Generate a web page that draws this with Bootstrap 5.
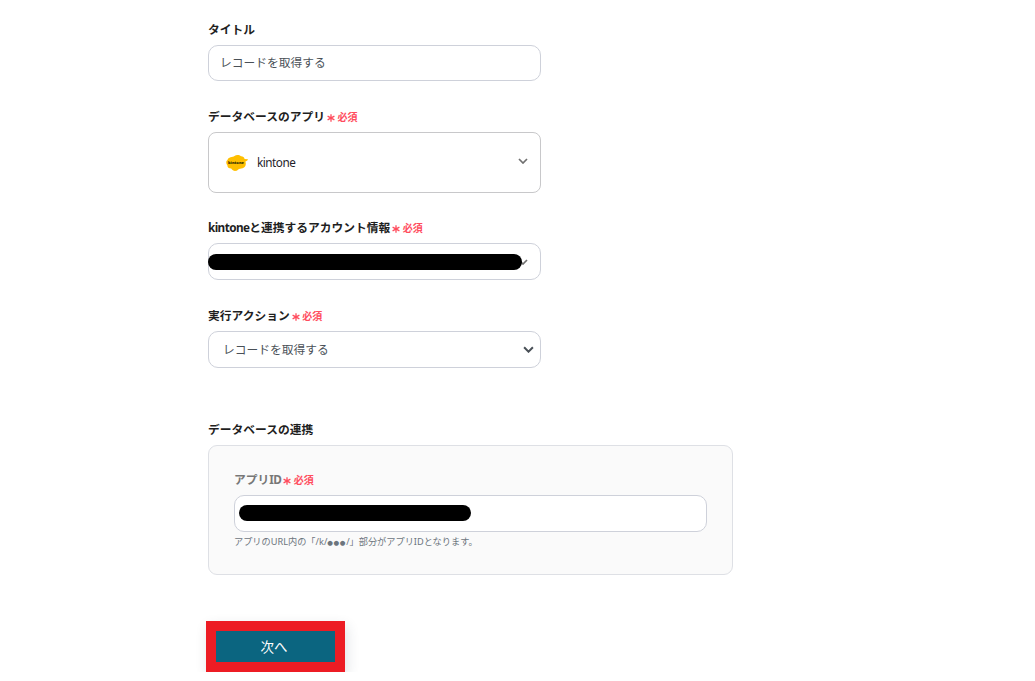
<!DOCTYPE html>
<html lang="ja">
  <head>
    <meta charset="UTF-8" />
    <meta name="viewport" content="width=device-width, initial-scale=1.0" />
    <title>レコードを取得する</title>
    <link
      href="https://cdn.jsdelivr.net/npm/bootstrap@5.3.2/dist/css/bootstrap.min.css"
      rel="stylesheet"
    />
    <style>
      body {
        font-family: "Noto Sans", "Noto Sans CJK JP", sans-serif;
        font-size: 11.75px;
        line-height: 18px;
        color: #1f1f1f;
        overflow: hidden;
      }
      .action-form {
        width: 525px;
        margin-left: 208px;
        padding-top: 20px;
      }
      .field {
        width: 333px;
        margin-bottom: 26px;
      }
      .field-app {
        margin-bottom: 25px;
      }
      .field-action {
        margin-bottom: 52px;
      }
      .field-label {
        display: flex;
        align-items: center;
        height: 18px;
        margin-bottom: 7px;
        font-weight: 700;
        white-space: nowrap;
      }
      .latin {
        letter-spacing: -0.5px;
      }
      .field-label .latin {
        letter-spacing: -0.6px;
      }
      .required {
        display: flex;
        align-items: center;
        gap: 2.5px;
        margin-left: 2px;
        padding-top: 1px;
        color: #ff4d5e;
        font-size: 10px;
      }
      .required svg {
        margin-top: 2px;
      }
      .field-box,
      .field-box:focus {
        height: 37px;
        padding: 0 11px;
        font-size: inherit;
        color: #495057;
        background-color: #fff;
        border: 1px solid #ced1da;
        border-radius: 10px;
      }
      .field-title .field-box {
        height: 36px;
        padding-bottom: 3px;
      }
      .field-app .field-box {
        height: 61px;
        padding: 0 12px 0 17px;
        color: #1f1f2b;
        border-color: #c8c8ca;
        border-radius: 8px;
      }
      .field-account .field-box {
        padding-right: 12px;
      }
      .field-action .field-box {
        padding: 0 6px 1px 14px;
      }
      .app-name {
        margin-left: 9px;
        padding-bottom: 1px;
      }
      .masked {
        display: block;
        height: 16px;
        background: #000;
        border-radius: 8px;
      }
      .masked-account {
        width: 314px;
        margin-left: -12px;
        margin-right: -10px;
        position: relative;
      }
      .masked-id {
        width: 232px;
        margin: 0 0 2px -7px;
      }
      .link-panel {
        height: 130px;
        padding: 24px 25px;
        background: #fafafa;
        border: 1px solid #dee0e5;
        border-radius: 9px;
      }
      .link-panel .field-label {
        color: #777;
      }
      .help {
        margin: 3px 0 0;
        font-size: 9.2px;
        line-height: 13px;
        color: #6c757d;
      }
      .dots {
        font-family: "DejaVu Sans", sans-serif;
        font-size: 6.5px;
        letter-spacing: 0.6px;
        vertical-align: 0.5px;
      }
      .next-frame {
        display: inline-block;
        margin: 46px 0 0 -2px;
        border: 10px solid #ed1c24;
        box-shadow: 2px 5px 12px rgba(40, 60, 80, 0.14);
      }
      .btn-next,
      .btn-next:hover {
        display: block;
        width: 119px;
        height: 31px;
        padding: 0 3px 0 0;
        font-size: 13.5px;
        line-height: 30px;
        color: #fff;
        background: #0b6580;
        border: 0;
        border-radius: 0;
      }
    </style>
  </head>
  <body>
    <svg class="d-none">
      <symbol id="asterisk" viewBox="0 0 8 8">
        <path
          d="M4 .3v7.4M.6 2.1l6.8 3.8M7.4 2.1L.6 5.9"
          fill="none"
          stroke="currentColor"
          stroke-width="1.3"
        />
      </symbol>
      <symbol id="chevron" viewBox="0 0 10 6">
        <path d="M1 1l4 4 4-4" fill="none" stroke="currentColor" />
      </symbol>
    </svg>

    <form class="action-form">
      <div class="field field-title">
        <label class="field-label" for="title">タイトル</label>
        <input
          type="text"
          class="form-control field-box"
          id="title"
          value="レコードを取得する"
        />
      </div>

      <div class="field field-app">
        <div class="field-label">
          データベースのアプリ
          <span class="required"
            ><svg width="8" height="8"><use href="#asterisk" /></svg>必須</span
          >
        </div>
        <div class="field-box d-flex align-items-center">
          <svg width="22" height="18" viewBox="0 0 22 18" class="flex-shrink-0">
            <path
              d="M4.5 3.2C6.2 2.6 7.5 3 8.5 2C10.3.4 13.4.6 15 2.3C16.8 2.2 18.2 3.2 18.6 5L22 5.3C21.6 6.7 20.4 7.3 19.4 7.5C20.4 10.4 19.6 13.2 16.6 14.2C14.8 14.9 13.2 14.4 12 15.8C10.4 17.6 6.8 17.5 5.2 14.6C2.6 14.4 1.3 13.1 1.4 11.2C-.2 9.6-.1 7 1.5 6C1.8 4.6 3 3.6 4.5 3.2Z"
              fill="#ffbf00"
            />
            <text
              x="10"
              y="10.2"
              text-anchor="middle"
              font-family="Open Sans, sans-serif"
              font-size="4.2"
              font-weight="800"
              textLength="16"
              lengthAdjust="spacingAndGlyphs"
              fill="#2a1f00"
            >
              kintone
            </text>
          </svg>
          <span class="latin app-name">kintone</span>
          <svg width="10" height="6" class="ms-auto mb-1" stroke-width="1.7" color="#707070">
            <use href="#chevron" />
          </svg>
        </div>
      </div>

      <div class="field field-account">
        <div class="field-label">
          <span class="latin">kintone</span>と連携するアカウント情報
          <span class="required"
            ><svg width="8" height="8"><use href="#asterisk" /></svg>必須</span
          >
        </div>
        <div class="field-box d-flex align-items-center">
          <span class="masked masked-account flex-shrink-0"></span>
          <svg width="10" height="6" class="ms-auto flex-shrink-0" stroke-width="1.7" color="#707070">
            <use href="#chevron" />
          </svg>
        </div>
      </div>

      <div class="field field-action">
        <div class="field-label">
          実行アクション
          <span class="required"
            ><svg width="8" height="8"><use href="#asterisk" /></svg>必須</span
          >
        </div>
        <div class="field-box d-flex align-items-center">
          レコードを取得する
          <svg width="11" height="7" class="ms-auto" stroke-width="1.8" color="#495057">
            <use href="#chevron" />
          </svg>
        </div>
      </div>

      <div class="field-label">データベースの連携</div>
      <div class="link-panel">
        <div class="field-label">
          アプリ<span class="latin">ID</span>
          <span class="required"
            ><svg width="8" height="8"><use href="#asterisk" /></svg>必須</span
          >
        </div>
        <div class="field-box d-flex align-items-center">
          <span class="masked masked-id"></span>
        </div>
        <p class="help">アプリのURL内の「/k/<span class="dots">●●●</span>/」部分がアプリIDとなります。</p>
      </div>

      <div class="next-frame">
        <button type="button" class="btn btn-next">次へ</button>
      </div>
    </form>

    <script src="https://cdn.jsdelivr.net/npm/bootstrap@5.3.2/dist/js/bootstrap.bundle.min.js"></script>
  </body>
</html>
